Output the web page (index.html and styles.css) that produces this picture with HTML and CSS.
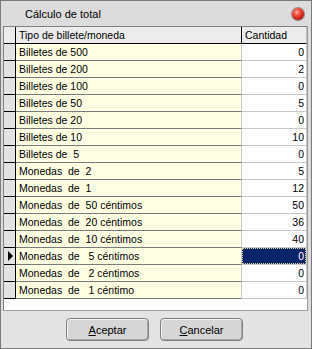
FILE: index.html
```html
<!DOCTYPE html>
<html lang="es">
<head>
<meta charset="utf-8">
<title>Cálculo de total</title>
<link rel="stylesheet" href="styles.css">
</head>
<body>
<div class="window">
  <div class="titlebar">
    <span class="title">Cálculo de total</span>
    <span class="close"></span>
  </div>
  <div class="grid">
    <div class="row header"><div class="ind"></div><div class="name">Tipo de billete/moneda</div><div class="qty">Cantidad</div></div>
    <div class="row"><div class="ind"></div><div class="name">Billetes de 500</div><div class="qty">0</div></div>
    <div class="row"><div class="ind"></div><div class="name">Billetes de 200</div><div class="qty">2</div></div>
    <div class="row"><div class="ind"></div><div class="name">Billetes de 100</div><div class="qty">0</div></div>
    <div class="row"><div class="ind"></div><div class="name">Billetes de 50</div><div class="qty">5</div></div>
    <div class="row"><div class="ind"></div><div class="name">Billetes de 20</div><div class="qty">0</div></div>
    <div class="row"><div class="ind"></div><div class="name">Billetes de 10</div><div class="qty">10</div></div>
    <div class="row"><div class="ind"></div><div class="name">Billetes de  5</div><div class="qty">0</div></div>
    <div class="row"><div class="ind"></div><div class="name">Monedas  de  2</div><div class="qty">5</div></div>
    <div class="row"><div class="ind"></div><div class="name">Monedas  de  1</div><div class="qty">12</div></div>
    <div class="row"><div class="ind"></div><div class="name">Monedas  de  50 céntimos</div><div class="qty">50</div></div>
    <div class="row"><div class="ind"></div><div class="name">Monedas  de  20 céntimos</div><div class="qty">36</div></div>
    <div class="row"><div class="ind"></div><div class="name">Monedas  de  10 céntimos</div><div class="qty">40</div></div>
    <div class="row current"><div class="ind"><span class="arrow"></span></div><div class="name">Monedas  de   5 céntimos</div><div class="qty selected"><span class="focus">0</span></div></div>
    <div class="row"><div class="ind"></div><div class="name">Monedas  de   2 céntimos</div><div class="qty">0</div></div>
    <div class="row"><div class="ind"></div><div class="name">Monedas  de   1 céntimo</div><div class="qty">0</div></div>
  </div>
  <div class="footer">
    <button class="btn"><u>A</u>ceptar</button>
    <button class="btn"><u>C</u>ancelar</button>
  </div>
</div>
</body>
</html>
```

FILE: styles.css
```css
html, body {
  margin: 0;
  padding: 0;
  background: #d4d0c8;
}

body {
  font-family: "Liberation Sans", Arial, sans-serif;
  font-size: 10.5px;
  color: #000;
}

.window {
  width: 312px;
  height: 349px;
  box-sizing: border-box;
  border: 1px solid #7b7b7b;
  background: #dcdcdc;
  display: flex;
  flex-direction: column;
}

.titlebar {
  height: 25px;
  display: flex;
  align-items: center;
  padding-left: 24px;
  padding-right: 7px;
}

.title {
  flex: 1;
  font-size: 11px;
  color: #000;
  padding-top: 1px;
}

.close {
  width: 12px;
  height: 12px;
  border-radius: 50%;
  background: radial-gradient(circle at 40% 35%, #ffb0a8 0, #f05040 30%, #c01810 70%, #801008 100%);
  box-shadow: 0 0 0 1px #a08080;
}

.grid {
  margin: 0 3px 0 2px;
  height: 285px;
  box-sizing: border-box;
  border: 1px solid #808080;
  border-right-color: #9a9a9a;
  border-bottom-color: #a0a0a0;
  background: #fff;
}

.row {
  display: grid;
  grid-template-columns: 12px 226px 65px;
  height: 17px;
}

.row > div {
  box-sizing: border-box;
  height: 17px;
  line-height: 16px;
  white-space: pre;
}

.ind {
  border-right: 1px solid #000;
  border-bottom: 1px solid #000;
  background: #e2e2e2;
  display: flex;
  align-items: center;
  justify-content: center;
}

.name {
  padding-left: 3px;
  border-right: 1px solid #c8c8c8;
  border-bottom: 1px solid #7a7a7a;
  background: #ffffe4;
}

.qty {
  text-align: right;
  padding-right: 2px;
  border-bottom: 1px solid #c8c8c8;
  border-right: 1px solid #c8c8c8;
  background: #fff;
}

.header .ind,
.header .name,
.header .qty {
  background: #ececec;
  border-bottom: 1px solid #000;
}

.header .name {
  border-right: 1px solid #000;
}

.header .qty {
  text-align: left;
  padding-left: 3px;
  border-right: 1px solid #c0c0c0;
}

.arrow {
  width: 0;
  height: 0;
  border-top: 5px solid transparent;
  border-bottom: 5px solid transparent;
  border-left: 5px solid #000;
  margin-left: 1px;
}

.qty.selected {
  background: #0a246a;
  color: #fff;
  padding: 0;
  border-bottom-color: #c8c8c8;
}

.focus {
  display: block;
  height: 100%;
  box-sizing: border-box;
  border: 1px dotted #d8d890;
  padding-right: 1px;
  line-height: 14px;
}

.footer {
  flex: 1;
  display: flex;
  gap: 11px;
  padding: 7px 0 0 65px;
  align-items: flex-start;
  background: #e4e4e4;
}

.btn {
  width: 83px;
  height: 23px;
  box-sizing: border-box;
  border: 1px solid #7e7e7e;
  border-radius: 4px;
  background: #d6d6d6;
  box-shadow: inset 1px 1px 0 #f4f4f4, inset -1px -1px 0 #a8a8a8;
  font-family: "Liberation Sans", Arial, sans-serif;
  font-size: 11px;
  color: #000;
  padding: 0;
}
```
